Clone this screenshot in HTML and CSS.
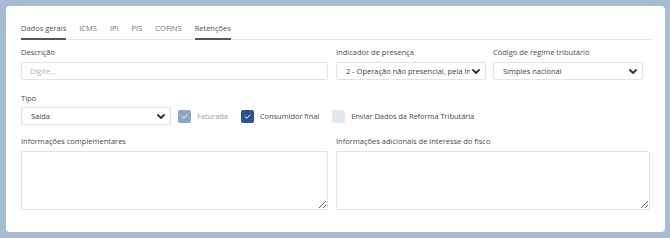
FILE: index.html
```html
<!DOCTYPE html>
<html lang="pt-BR">
<head>
<meta charset="utf-8">
<title>Dados gerais</title>
<link rel="stylesheet" href="styles.css">
</head>
<body>
<div class="card">
  <nav class="tabs">
    <span class="tab active">Dados gerais</span>
    <span class="tab">ICMS</span>
    <span class="tab">IPI</span>
    <span class="tab">PIS</span>
    <span class="tab">COFINS</span>
    <span class="tab active">Retenções</span>
  </nav>

  <div class="row row-1">
    <div class="field f-desc">
      <label class="label">Descrição</label>
      <div class="input placeholder">Digite...</div>
    </div>
    <div class="field f-sel">
      <label class="label">Indicador de presença</label>
      <div class="select"><span class="sel-text">2 - Operação não presencial, pela Internet</span>
        <svg class="chev" viewBox="0 0 8 5" width="8" height="5"><path d="M1 1 L4 4 L7 1" fill="none" stroke="#333" stroke-width="1.8" stroke-linecap="round" stroke-linejoin="round"/></svg>
      </div>
    </div>
    <div class="field f-sel">
      <label class="label">Código de regime tributário</label>
      <div class="select"><span class="sel-text">Simples nacional</span>
        <svg class="chev" viewBox="0 0 8 5" width="8" height="5"><path d="M1 1 L4 4 L7 1" fill="none" stroke="#333" stroke-width="1.8" stroke-linecap="round" stroke-linejoin="round"/></svg>
      </div>
    </div>
  </div>

  <div class="row row-2">
    <div class="field f-sel">
      <label class="label label-tipo">Tipo</label>
      <div class="select"><span class="sel-text">Saída</span>
        <svg class="chev" viewBox="0 0 8 5" width="8" height="5"><path d="M1 1 L4 4 L7 1" fill="none" stroke="#333" stroke-width="1.8" stroke-linecap="round" stroke-linejoin="round"/></svg>
      </div>
    </div>
    <div class="checks">
      <div class="check disabled">
        <span class="box box-disabled"><svg viewBox="0 0 10 10" width="9" height="9"><path d="M2.3 5.2 L4.2 7 L7.8 3.2" fill="none" stroke="#fff" stroke-width="1.1" stroke-linecap="round" stroke-linejoin="round"/></svg></span>
        <span class="check-text muted">Faturada</span>
      </div>
      <div class="check">
        <span class="box box-on"><svg viewBox="0 0 10 10" width="9" height="9"><path d="M2.3 5.2 L4.2 7 L7.8 3.2" fill="none" stroke="#fff" stroke-width="1.1" stroke-linecap="round" stroke-linejoin="round"/></svg></span>
        <span class="check-text">Consumidor final</span>
      </div>
      <div class="check">
        <span class="box box-off"></span>
        <span class="check-text">Enviar Dados da Reforma Tributária</span>
      </div>
    </div>
  </div>

  <div class="row row-3">
    <div class="field f-desc">
      <label class="label">Informações complementares</label>
      <textarea class="textarea"></textarea>
    </div>
    <div class="field f-wide">
      <label class="label">Informações adicionais de interesse do fisco</label>
      <textarea class="textarea"></textarea>
    </div>
  </div>
</div>
</body>
</html>
```

FILE: styles.css
```css
* { box-sizing: border-box; }

html, body {
  margin: 0;
  height: 100%;
}

body {
  background: #aabcd3;
  padding: 6px 5px 6px 6px;
  font-family: "Open Sans", "Noto Sans", sans-serif;
  font-size: 7.5px;
  color: #4a4a4a;
}

.card {
  background: #ffffff;
  border-radius: 4px;
  height: 226px;
  padding: 0 13px 0 15px;
}

.tabs {
  display: flex;
  gap: 13px;
  padding-top: 17px;
  border-bottom: 1px solid #e8e8e8;
}

.tab {
  line-height: 10px;
  padding-bottom: 5px;
  border-bottom: 2px solid transparent;
  margin-bottom: -1px;
  color: #6c7380;
}

.tab.active {
  border-bottom-color: #4a5868;
  color: #4c5563;
}

.row {
  display: flex;
}

.row-1 { margin-top: 7px; gap: 7px; }
.row-1 .f-desc { margin-right: 1px; }
.row-2 { margin-top: 13px; align-items: flex-end; }
.row-3 { margin-top: 11px; gap: 8px; }

.field {
  display: flex;
  flex-direction: column;
}

.f-desc { width: 307px; }
.f-sel { width: 150px; }
.f-wide { width: 314px; }

.label {
  display: block;
  line-height: 10px;
  margin-bottom: 5px;
  color: #4a4a4a;
}

.label-tipo { margin-bottom: 4px; }

.input,
.select {
  height: 18px;
  border: 1px solid #e4e4e4;
  border-radius: 2px;
  display: flex;
  align-items: center;
  padding: 0 5px 0 8px;
  color: #444;
  background: #fff;
}

.placeholder { color: #b4b4b4; }

.select { padding-left: 9px; }

.sel-text {
  flex: 1;
  white-space: nowrap;
  overflow: hidden;
  margin-right: 2px;
}

.chev {
  flex: none;
  display: block;
}

.checks {
  display: flex;
  align-items: center;
  gap: 13px;
  margin-left: 7px;
  height: 18px;
}

.check {
  display: flex;
  align-items: center;
  gap: 6px;
}

.check-text { letter-spacing: -0.05px; }

.box {
  width: 13px;
  height: 13px;
  border-radius: 2px;
  display: flex;
  align-items: center;
  justify-content: center;
}

.box-disabled { background: #8fa5c7; }
.box-on { background: #2e5290; }
.box-off { background: #e3e7ef; }

.check-text { color: #4a4a4a; }
.check-text.muted { color: #a0a0a0; }

.textarea {
  display: block;
  width: 100%;
  height: 59px;
  border: 1px solid #e4e4e4;
  border-radius: 2px;
  resize: vertical;
  font: inherit;
  margin: 0;
  padding: 4px 8px;
}
```
